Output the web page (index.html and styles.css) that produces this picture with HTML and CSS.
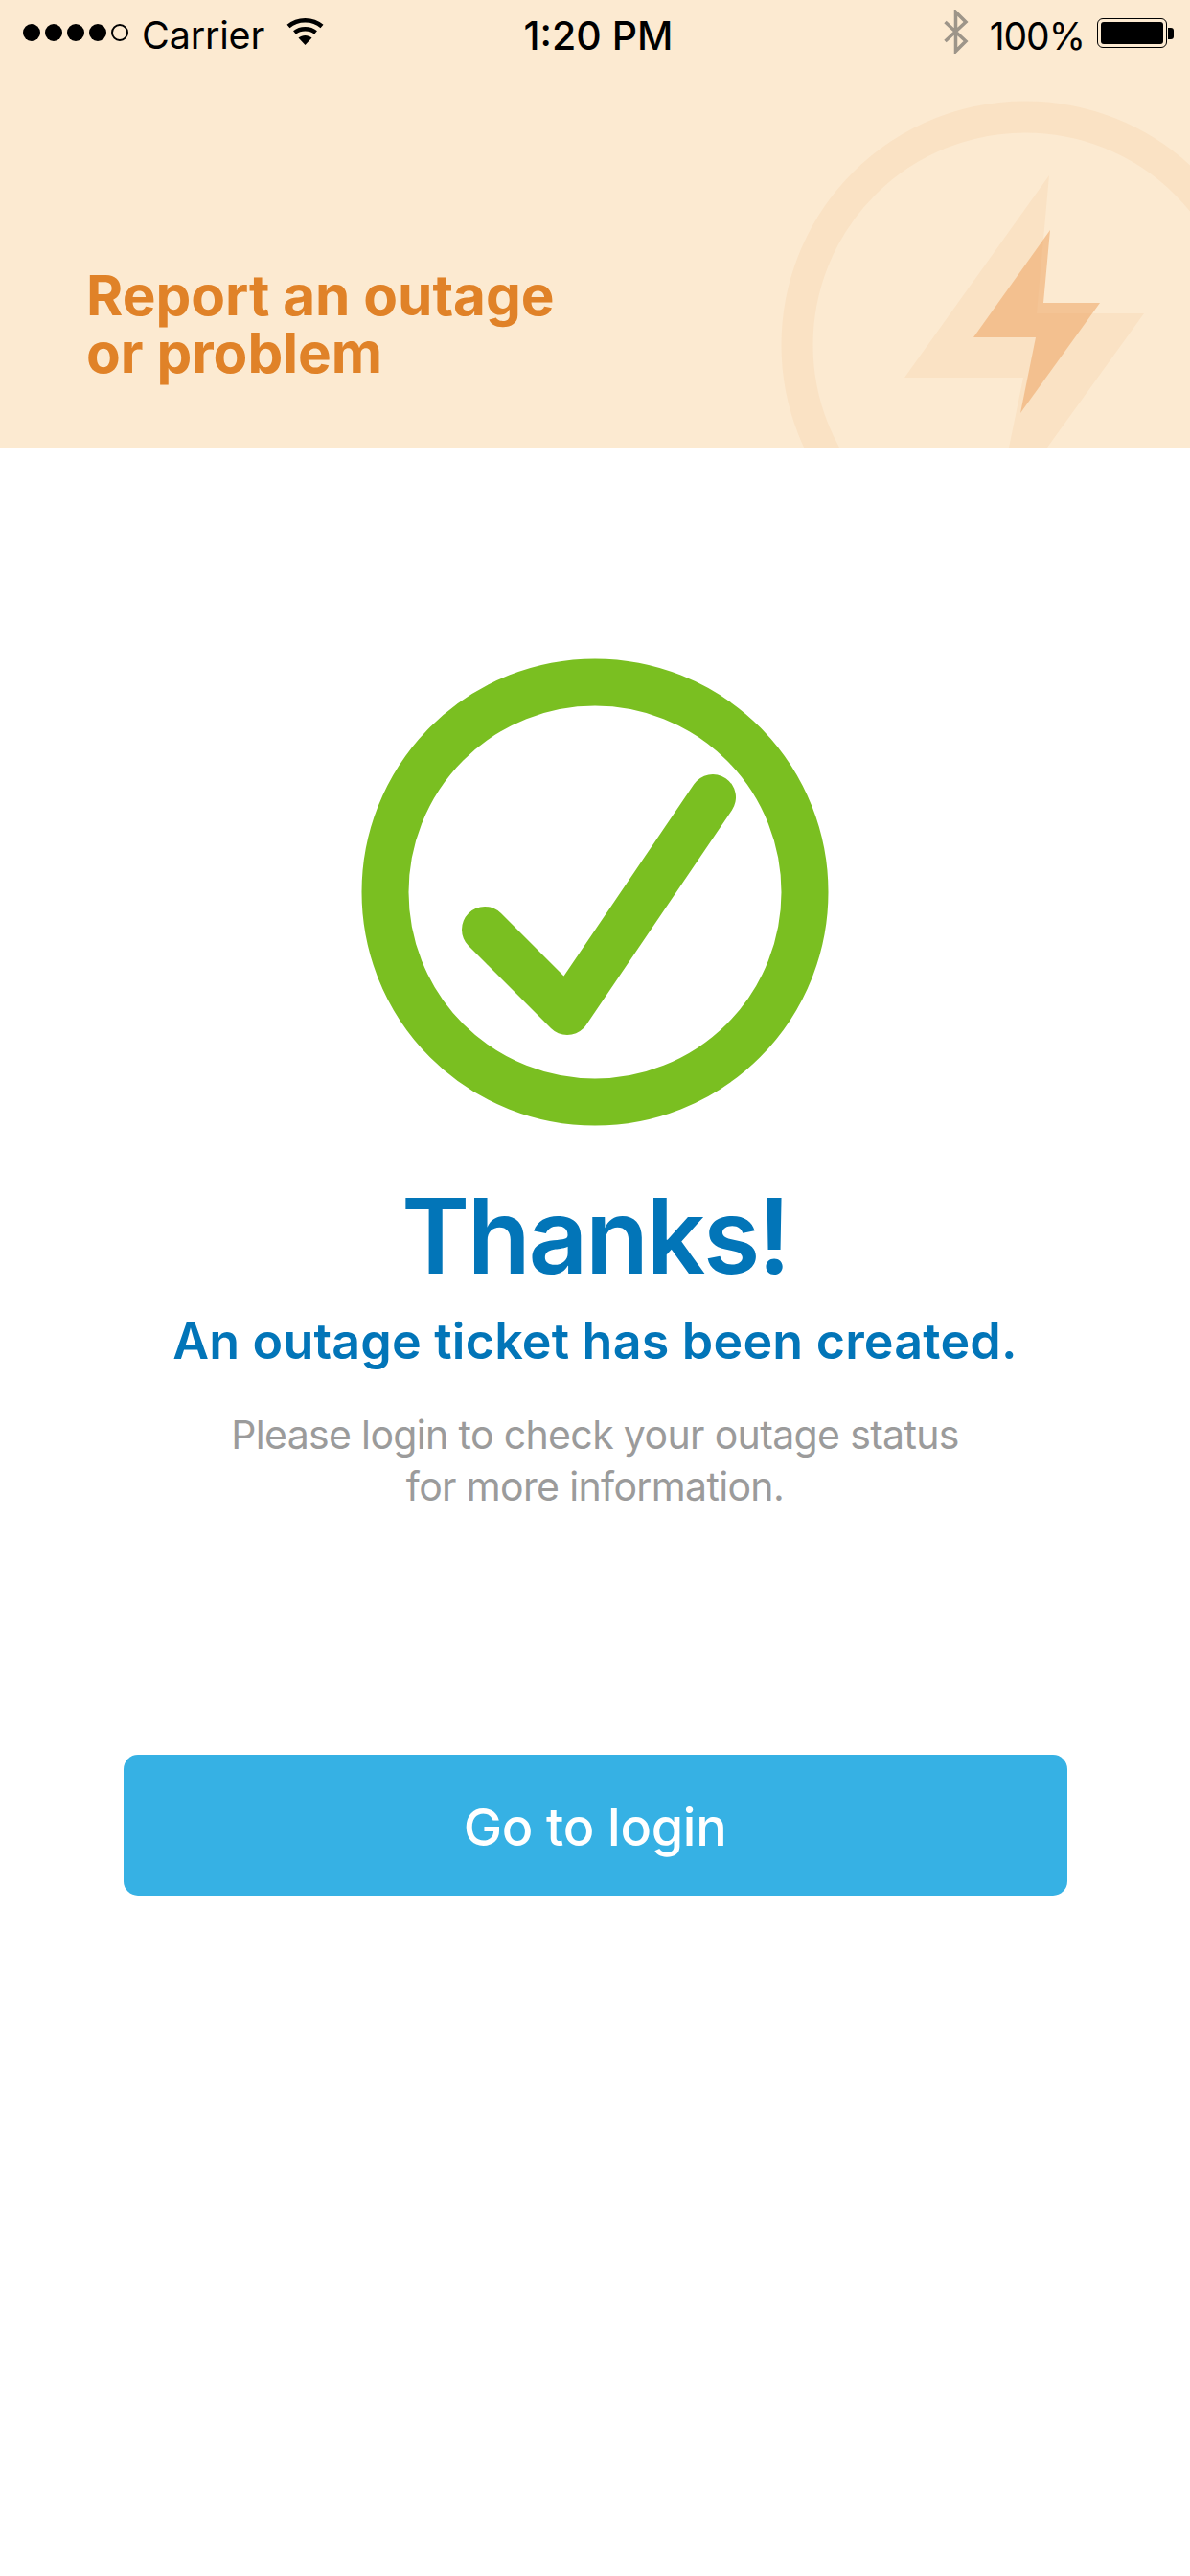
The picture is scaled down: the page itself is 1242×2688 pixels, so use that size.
FILE: index.html
```html
<!DOCTYPE html>
<html lang="en">
<head>
    <meta charset="UTF-8">
    <title>Report an outage</title>
    <link rel="stylesheet" href="styles.css">
</head>
<body>
    <header class="banner">
        <svg class="banner-art" width="1242" height="467" viewBox="0 0 1242 467">
            <circle cx="1070" cy="360" r="238" fill="none" stroke="#fae2c4" stroke-width="33"/>
            <polygon fill="#fae2c4" points="1095,183 944,394 1068,394 1053,467 1093,467 1194,327 1082,327"/>
            <polygon fill="#eeaa6d" fill-opacity="0.6" points="1096,240 1016,352 1081,352 1065,431 1148,316 1089,316"/>
        </svg>
        <div class="status-bar">
            <div class="status-left">
                <span class="dot"></span><span class="dot"></span><span class="dot"></span><span class="dot"></span><span class="dot dot-empty"></span>
                <span class="carrier">Carrier</span>
                <svg class="wifi" width="39" height="29" viewBox="0 0 39 29">
                    <path d="M2 9.5C11.5 1 27.500 1 37 9.500" fill="none" stroke="#000" stroke-width="4.500"/>
                    <path d="M8.500 16C14.500 11 24.500 11 30.500 16" fill="none" stroke="#000" stroke-width="4.500"/>
                    <path d="M12.500 21.500C16.500 18 22.500 18 26.500 21.500L19.500 29Z"/>
                </svg>
            </div>
            <div class="status-time">1:20 PM</div>
            <div class="status-right">
                <svg class="bluetooth" width="26" height="46" viewBox="0 0 26 46">
                    <path d="M1.500 13L23 33L12.500 43.500V2.500L23 13L1.500 33" fill="none" stroke="#9d9589" stroke-width="3.500"/>
                </svg>
                <span class="battery-pct">100%</span>
                <div class="battery">
                    <div class="battery-body"><div class="battery-fill"></div></div>
                    <div class="battery-nub"></div>
                </div>
            </div>
        </div>
        <h1 class="banner-title">Report an outage<br>or problem</h1>
    </header>
    <main class="content">
        <svg class="check" width="488" height="488" viewBox="0 0 488 488">
            <circle cx="244" cy="244" r="219" fill="none" stroke="#7abf21" stroke-width="49"/>
            <polyline points="129,283 215,369 367,145" fill="none" stroke="#7abf21" stroke-width="48" stroke-linecap="round" stroke-linejoin="round"/>
        </svg>
        <h2 class="thanks">Thanks!</h2>
        <p class="ticket">An outage ticket has been created.</p>
        <p class="info">Please login to check your outage status<br>for more information.</p>
        <button class="login-btn">Go to login</button>
    </main>
</body>
</html>
```

FILE: styles.css
```css
* { box-sizing: border-box; }
body { margin: 0; width: 1242px; height: 2688px; background: #fff; font-family: Inter, "Liberation Sans", sans-serif; overflow: hidden; }

.banner { position: relative; height: 467px; background: #fcead1; overflow: hidden; }
.banner-art { position: absolute; left: 0; top: 0; }

.status-bar { position: relative; display: flex; align-items: center; height: 74px; padding: 0 17px 0 24px; color: #000; }
.status-left { flex: 1; display: flex; align-items: center; gap: 5px; }
.status-right { flex: 1; display: flex; align-items: center; justify-content: flex-end; }
.dot { width: 18px; height: 18px; margin-bottom: 7px; border-radius: 50%; background: #000; }
.dot-empty { background: none; border: 2px solid #000; }
.carrier { margin-left: 9px; font-size: 39.500px; letter-spacing: -0.2px; }
.wifi { margin: 0 0 9px 18px; }
.status-time { font-size: 41px; font-weight: 500; }
.bluetooth { margin: 0 22px 8px 0; }
.battery-pct { font-size: 39px; margin-right: 13px; letter-spacing: -1px; }
.battery { display: flex; align-items: center; margin-bottom: 5px; }
.battery-body { width: 73px; height: 31px; padding: 3px; border: 1.500px solid #000; border-radius: 6px; }
.battery-fill { height: 100%; background: #000; border-radius: 3px; }
.battery-nub { width: 6px; height: 12px; background: #000; border-radius: 0 3px 3px 0; margin-left: 1px; }

.banner-title { position: relative; margin: 204px 0 0 90px; font-size: 58.400px; line-height: 60px; font-weight: 700; color: #e08228; }

.content { display: flex; flex-direction: column; align-items: center; padding-top: 220px; }
.thanks { margin: 50px 0 0; font-size: 108px; line-height: 130px; font-weight: 600; letter-spacing: -2.400px; color: #0275b8; }
.ticket { margin: 13px 0 0; font-size: 52px; line-height: 64px; font-weight: 600; letter-spacing: 0.2px; color: #0275b8; }
.info { margin: 38px 0 0; font-size: 41px; line-height: 54px; letter-spacing: -0.65px; text-align: center; color: #9b9b9b; }
.login-btn { width: 985px; height: 147px; margin-top: 253px; padding-top: 5px; border: none; border-radius: 15px; background: #36b1e4; color: #fff; font-family: inherit; font-size: 54px; font-weight: 500; letter-spacing: -0.3px; }
```
